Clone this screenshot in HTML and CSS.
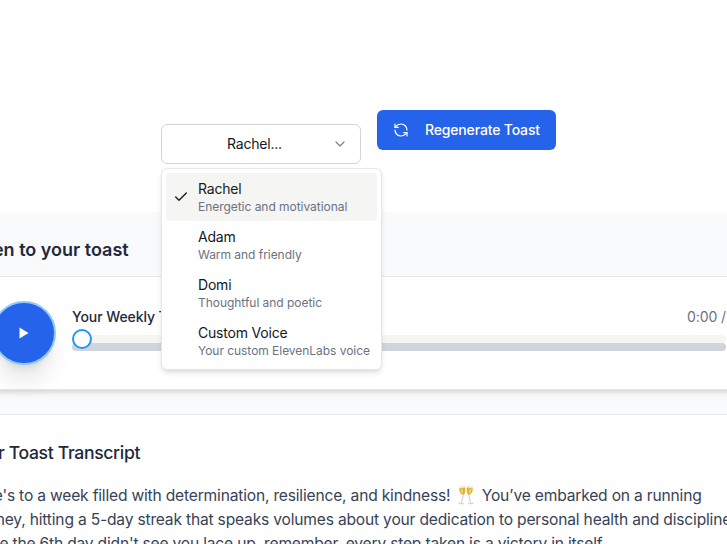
FILE: index.html
```
<!DOCTYPE html>
<html lang="en">
<head>
<meta charset="utf-8">
<title>Weekly Toast</title>
<link rel="stylesheet" href="styles.css">
</head>
<body>
<main class="page">
  <div class="toolbar">
    <div class="select">
      <button class="select-trigger" type="button">
        <span class="select-value">Rachel...</span>
        <svg class="chevron" viewBox="0 0 24 24"><path d="m6 9 6 6 6-6"/></svg>
      </button>
      <div class="menu">
        <div class="option selected">
          <svg class="check" viewBox="0 0 24 24"><path d="M20 6 9 17l-5-5"/></svg>
          <div class="name">Rachel</div>
          <div class="hint">Energetic and motivational</div>
        </div>
        <div class="option"><div class="name">Adam</div><div class="hint">Warm and friendly</div></div>
        <div class="option"><div class="name">Domi</div><div class="hint">Thoughtful and poetic</div></div>
        <div class="option"><div class="name">Custom Voice</div><div class="hint">Your custom ElevenLabs voice</div></div>
      </div>
    </div>
    <button class="regenerate" type="button">
      <svg viewBox="0 0 24 24"><path d="M21 12a9 9 0 0 0-9-9 9.75 9.75 0 0 0-6.740 2.740L3 8"/><path d="M3 3v5h5"/><path d="M3 12a9 9 0 0 0 9 9 9.750 9.750 0 0 0 6.740-2.740L21 16"/><path d="M16 16h5v5"/></svg>
      <span>Regenerate Toast</span>
    </button>
  </div>
  <section class="listen">
    <h2 class="listen-title">Listen to your toast</h2>
    <div class="player">
      <button class="play" type="button"><svg viewBox="0 0 12 14"><path d="M1.500 1.500v11l9-5.500z"/></svg></button>
      <div class="track">
        <div class="track-head"><span class="track-name">Your Weekly Toast</span><span class="time">0:00 /</span></div>
        <div class="bars"><div class="bar light"></div><div class="bar dark"></div><div class="thumb"></div></div>
      </div>
    </div>
  </section>
  <section class="transcript">
    <h3>Your Toast Transcript</h3>
    <p>Here's to a week filled with determination, resilience, and kindness! <svg class="emoji" viewBox="0 0 20 20">
      <path d="M3 1.200 9 .5C9.800 5 9.200 9.500 7.400 10 5 10.300 3 6 3 1.200z" fill="#eeeae2"/>
      <path d="M3.100 3.500 9.200 2.500C9.500 6.300 8.900 9.400 7.400 9.700 5.200 9.900 3.400 7.200 3.100 3.500z" fill="#dfb52f"/>
      <path d="M17 1.200 11 .5C10.200 5 10.800 9.500 12.600 10 15 10.300 17 6 17 1.200z" fill="#eeeae2"/>
      <path d="M16.900 3.500 10.800 2.500C10.500 6.300 11.100 9.400 12.600 9.700 14.800 9.900 16.600 7.200 16.900 3.500z" fill="#dfb52f"/>
      <path d="M7.200 10 5.400 18M12.800 10 14.600 18M2.500 18.200 8 18.900M17.500 18.200 12 18.900" fill="none" stroke="#d5d5d8" stroke-width="1.200"/>
      <path d="M5.500 4 6.500 8M14.500 4 13.500 8" fill="none" stroke="#f7de76" stroke-width="1.400"/>
    </svg> You’ve embarked on a running<br>journey, hitting a 5-day streak that speaks volumes about your dedication to personal health and discipline.<br>While the 6th day didn't see you lace up, remember, every step taken is a victory in itself.</p>
  </section>
</main>
</body>
</html>
```
FILE: styles.css
```
* { box-sizing: border-box; }
body { margin: 0; background: #fff; color: #1e293b; font-family: Inter, sans-serif; overflow: hidden; }
h2, h3, p { margin: 0; }
button { font: inherit; padding: 0; border: 0; }
.page { height: 544px; overflow: hidden; }
.toolbar { display: flex; align-items: flex-start; gap: 16px; height: 212px; padding: 110px 0 0 161px; }
.select { position: relative; width: 200px; margin-top: 14px; }
.select-trigger { display: flex; align-items: center; width: 200px; height: 40px; padding: 0 12px; border: 1px solid #d1d5db; border-radius: 6px; background: #fff; color: #111827; font-size: 14px; line-height: 20px; letter-spacing: -.22px; }
.select-value { flex: 1; text-align: center; padding: 0 0 1px 3px; }
.chevron { width: 16px; height: 16px; fill: none; stroke: #858585; stroke-width: 2; stroke-linecap: round; stroke-linejoin: round; }
.menu { position: absolute; z-index: 2; top: 44px; left: 0; width: 221px; height: 202px; padding: 4px; border: 1px solid #e5e7eb; border-radius: 6px; background: #fff; box-shadow: 0 4px 6px -1px rgba(0,0,0,.1), 0 2px 4px -2px rgba(0,0,0,.1); white-space: nowrap; }
.option { position: relative; height: 48px; padding: 6px 8px 6px 32px; border-radius: 4px; }
.option.selected { background: #f5f5f4; }
.check { position: absolute; left: 7px; top: 16px; width: 16px; height: 16px; fill: none; stroke: #1c1917; stroke-width: 2; stroke-linecap: round; stroke-linejoin: round; }
.name { font-size: 14px; line-height: 20px; letter-spacing: -.2px; color: #111827; }
.selected .name { color: #1c1917; }
.hint { font-size: 12px; line-height: 16px; letter-spacing: -.04px; color: #6b7280; }
.regenerate { display: flex; align-items: center; width: 179px; height: 40px; padding-left: 16px; gap: 16px; border-radius: 6px; background: #2563eb; color: #fff; font-size: 14px; line-height: 20px; font-weight: 500; letter-spacing: -.16px; white-space: nowrap; }
.regenerate span { padding-bottom: 1px; }
.regenerate svg { width: 16px; height: 16px; fill: none; stroke: currentColor; stroke-width: 1.8; stroke-linecap: round; stroke-linejoin: round; }
.listen { height: 202px; background: #f8fafc; }
.listen-title { height: 64px; padding-top: 24px; margin-left: -38px; font-size: 18px; line-height: 28px; font-weight: 600; }
.player { display: flex; gap: 16px; height: 114px; padding: 24px 33px 0 24px; margin: 0 -32px; border-top: 1px solid #e5e7eb; border-bottom: 1px solid #e5e7eb; background: #fff; box-shadow: 0 4px 6px -1px rgba(0,0,0,.1), 0 2px 4px -2px rgba(0,0,0,.1); }
.play { flex: none; display: flex; align-items: center; justify-content: center; width: 64px; height: 64px; border: 2px solid #93c5fd; border-radius: 50%; background: #2563eb; box-shadow: 0 20px 25px -5px rgba(0,0,0,.1), 0 8px 10px -6px rgba(0,0,0,.1); }
.play svg { width: 12px; height: 14px; fill: #fff; }
.track { flex: 1; padding-top: 6px; }
.track-head { display: flex; justify-content: space-between; font-size: 14px; line-height: 20px; }
.track-name { font-weight: 500; letter-spacing: -.08px; }
.time { color: #6b7280; letter-spacing: -.1px; }
.bars { position: relative; margin-top: 8px; }
.bar { height: 8px; border-radius: 4px; }
.light { background: #f5f5f4; }
.dark { background: #d1d5db; }
.thumb { position: absolute; left: 0; top: -6px; width: 20px; height: 20px; border: 2px solid #2196f3; border-radius: 50%; background: #fff; }
.transcript { border-top: 1px solid #e5e7eb; padding-top: 24px; white-space: nowrap; }
.transcript h3 { margin-left: -33px; font-size: 17.6px; line-height: 28px; font-weight: 500; letter-spacing: -.34px; }
.transcript p { margin: 17px 0 0 -32px; color: #374357; font-size: 15.6px; line-height: 24px; letter-spacing: -.19px; }
.emoji { width: 20px; height: 20px; margin: 0 2px 0 1px; vertical-align: -4px; }
```
